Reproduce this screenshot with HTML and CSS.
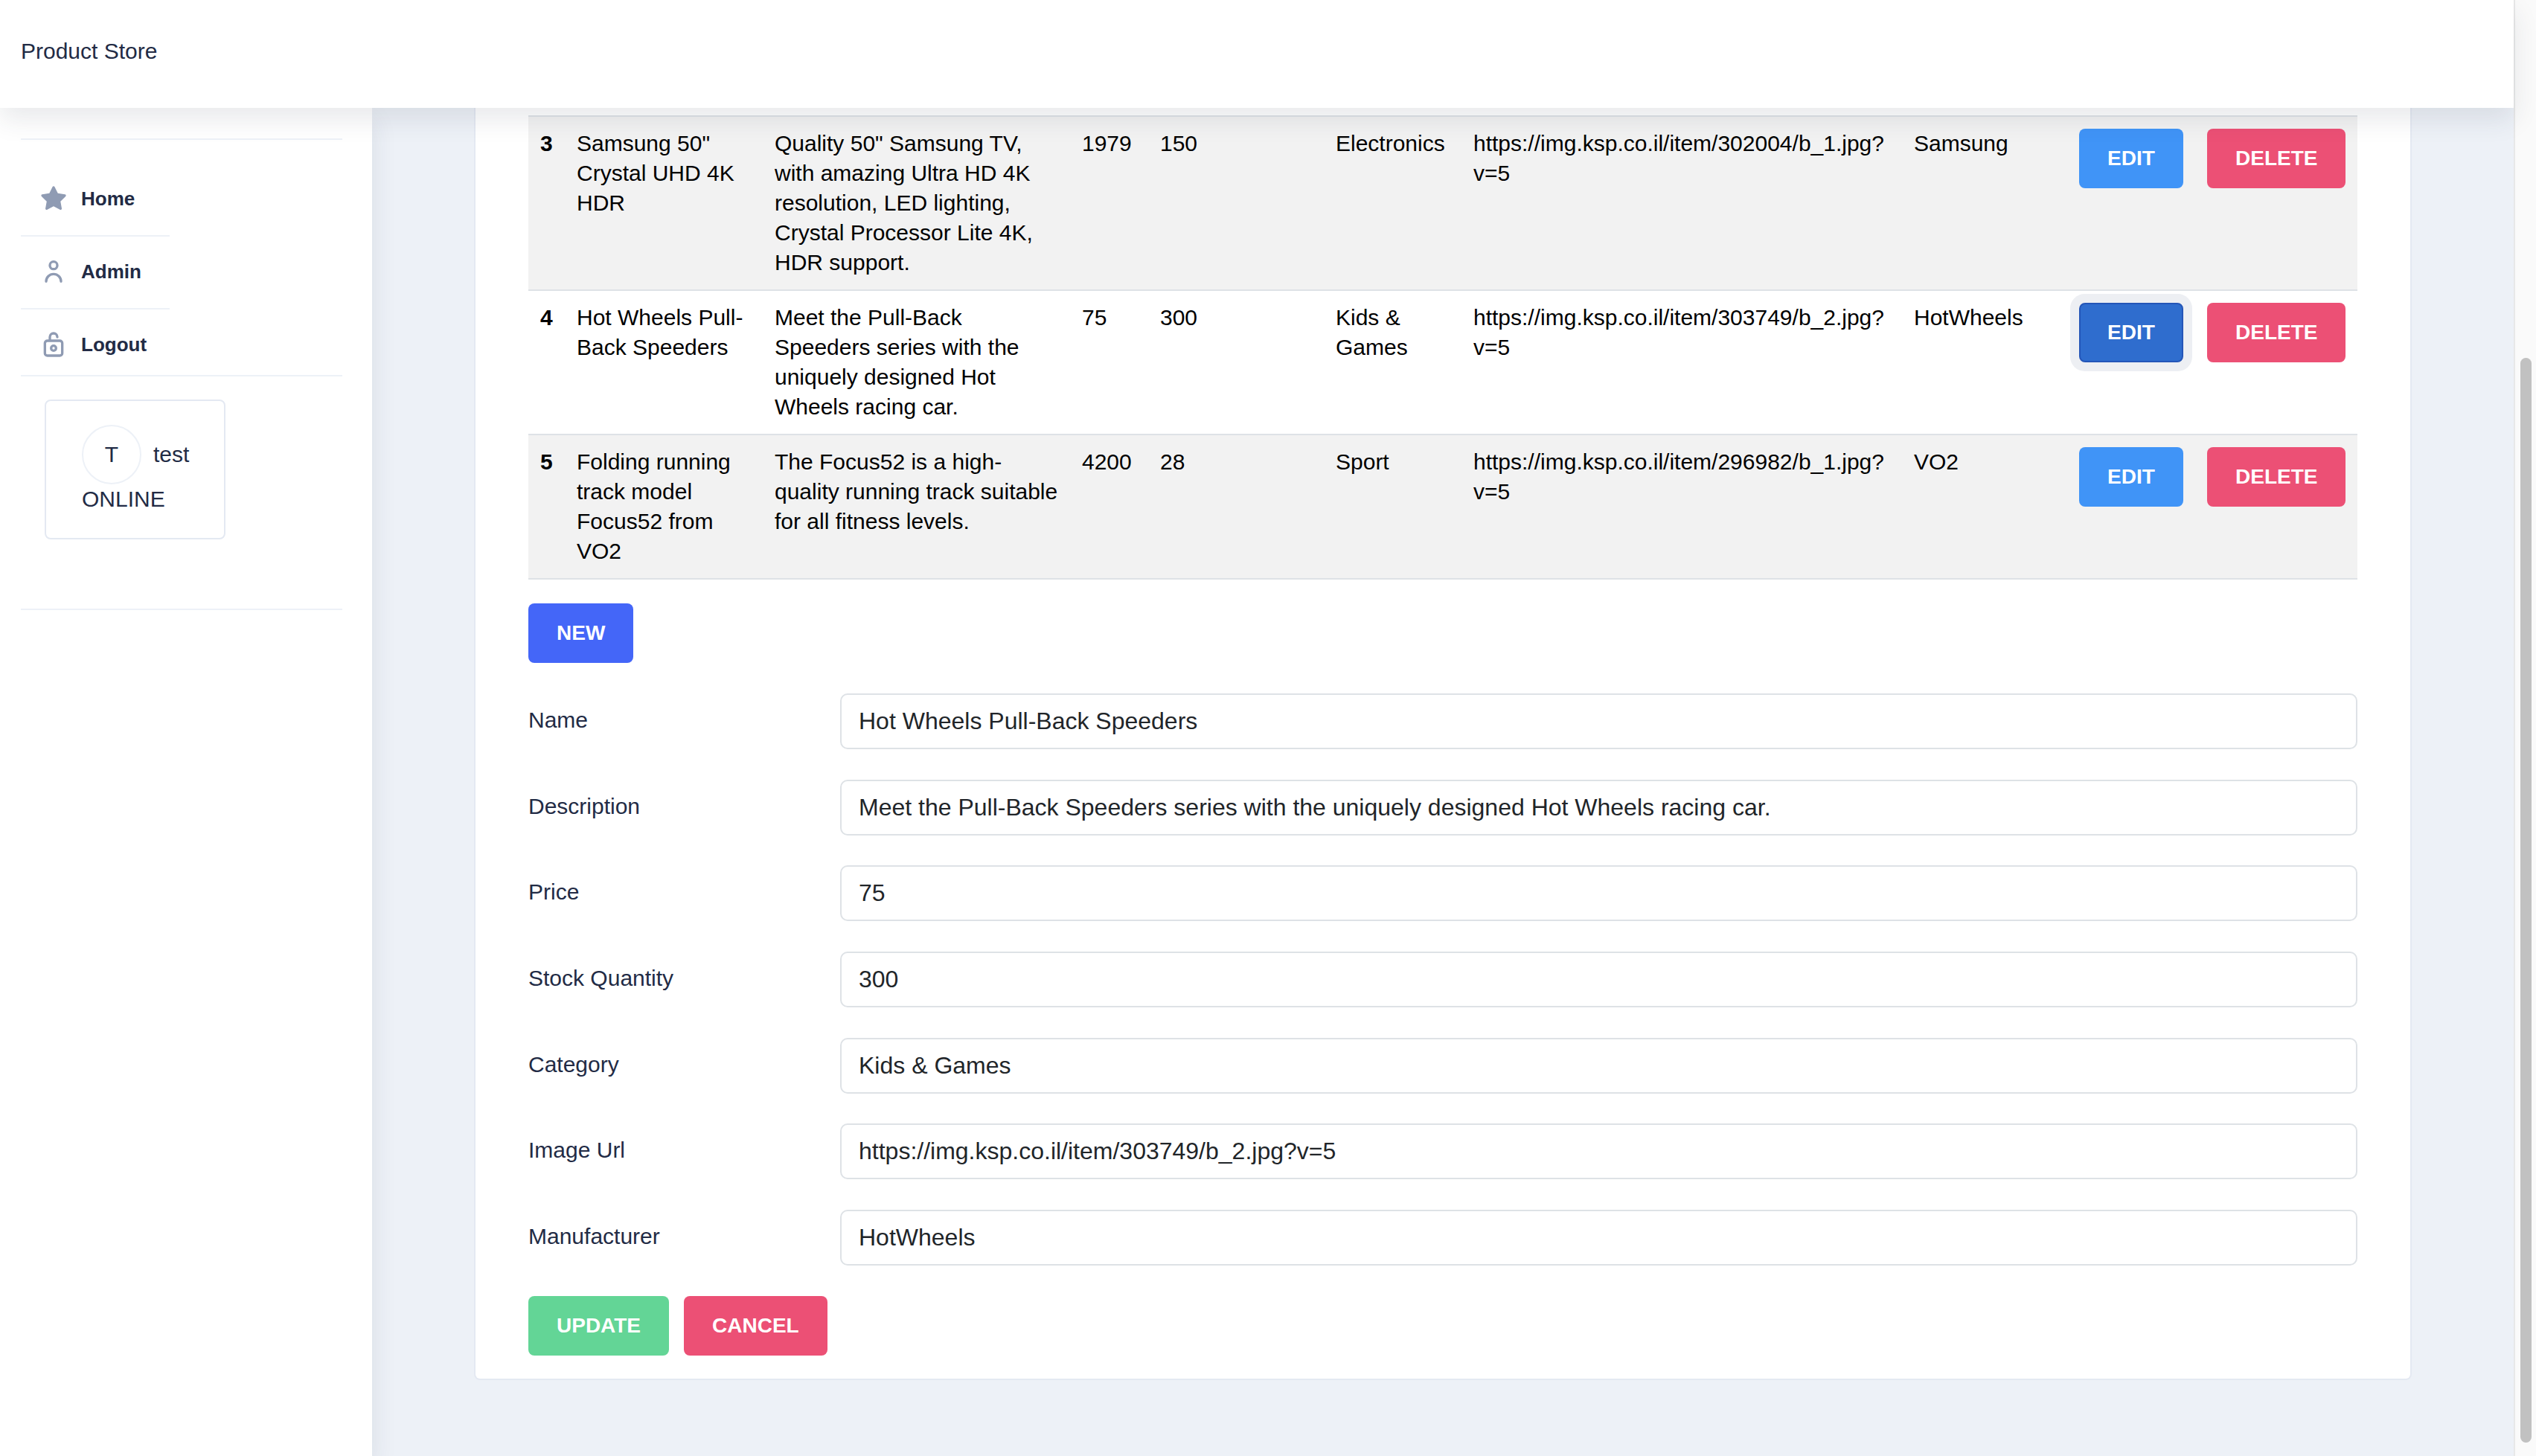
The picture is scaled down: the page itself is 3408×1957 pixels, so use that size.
FILE: index.html
```html
<!DOCTYPE html>
<html lang="en">

<head>
  <meta charset="UTF-8">
  <title>Product Store</title>
  <link rel="stylesheet" href="styles.css">
</head>

<body>
  <div class="app">
    <header class="topbar">Product Store</header>

    <div class="content">
      <aside class="sidebar">
        <hr class="rule first-rule">
        <ul class="menu">
          <li class="menu-item">
            <svg class="menu-icon" viewBox="0 0 24 24"><path d="M17.56 21a1 1 0 0 1-.46-.11L12 18.22l-5.1 2.67a1 1 0 0 1-1.45-1.06l1-5.63-4.12-4a1 1 0 0 1-.25-1 1 1 0 0 1 .81-.68l5.7-.83 2.51-5.13a1 1 0 0 1 1.8 0l2.54 5.12 5.7.83a1 1 0 0 1 .81.68 1 1 0 0 1-.25 1l-4.12 4 1 5.63a1 1 0 0 1-.4 1 1 1 0 0 1-.62.19z"/></svg>
            <span>Home</span>
          </li>
          <li class="menu-item">
            <svg class="menu-icon" viewBox="0 0 24 24"><path d="M12 11a4 4 0 1 0-4-4 4 4 0 0 0 4 4zm0-6a2 2 0 1 1-2 2 2 2 0 0 1 2-2z"/><path d="M12 13a7 7 0 0 0-7 7 1 1 0 0 0 2 0 5 5 0 0 1 10 0 1 1 0 0 0 2 0 7 7 0 0 0-7-7z"/></svg>
            <span>Admin</span>
          </li>
          <li class="menu-item last-item">
            <svg class="menu-icon" viewBox="0 0 24 24"><path d="M17 8h-7V6a2 2 0 0 1 4 0 1 1 0 0 0 2 0 4 4 0 0 0-8 0v2H7a3 3 0 0 0-3 3v8a3 3 0 0 0 3 3h10a3 3 0 0 0 3-3v-8a3 3 0 0 0-3-3zm1 11a1 1 0 0 1-1 1H7a1 1 0 0 1-1-1v-8a1 1 0 0 1 1-1h10a1 1 0 0 1 1 1z"/><path d="M12 12a3 3 0 1 0 3 3 3 3 0 0 0-3-3zm0 4a1 1 0 1 1 1-1 1 1 0 0 1-1 1z"/></svg>
            <span>Logout</span>
          </li>
        </ul>
        <div class="user-card">
          <div class="user-row">
            <div class="avatar">T</div>
            <span>test</span>
          </div>
          <div class="user-status">ONLINE</div>
        </div>
        <hr class="rule last-rule">
      </aside>

      <main class="main">
        <section class="card">
          <table class="products">
            <colgroup>
              <col class="c-id">
              <col class="c-name">
              <col class="c-desc">
              <col class="c-price">
              <col class="c-stock">
              <col class="c-cat">
              <col class="c-url">
              <col class="c-man">
              <col class="c-edit">
              <col class="c-del">
            </colgroup>
            <tbody>
              <tr class="striped">
                <th>3</th>
                <td>Samsung 50" Crystal UHD 4K HDR</td>
                <td>Quality 50" Samsung TV, with amazing Ultra HD 4K resolution, LED lighting, Crystal Processor Lite 4K, HDR support.</td>
                <td>1979</td>
                <td>150</td>
                <td>Electronics</td>
                <td>https://img.ksp.co.il/item/302004/b_1.jpg?v=5</td>
                <td>Samsung</td>
                <td><button class="btn btn-edit">EDIT</button></td>
                <td><button class="btn btn-danger">DELETE</button></td>
              </tr>
              <tr>
                <th>4</th>
                <td>Hot Wheels Pull-Back Speeders</td>
                <td>Meet the Pull-Back Speeders series with the uniquely designed Hot Wheels racing car.</td>
                <td>75</td>
                <td>300</td>
                <td>Kids &amp; Games</td>
                <td>https://img.ksp.co.il/item/303749/b_2.jpg?v=5</td>
                <td>HotWheels</td>
                <td><button class="btn btn-edit btn-active">EDIT</button></td>
                <td><button class="btn btn-danger">DELETE</button></td>
              </tr>
              <tr class="striped">
                <th>5</th>
                <td>Folding running track model Focus52 from VO2</td>
                <td>The Focus52 is a high-quality running track suitable for all fitness levels.</td>
                <td>4200</td>
                <td>28</td>
                <td>Sport</td>
                <td>https://img.ksp.co.il/item/296982/b_1.jpg?v=5</td>
                <td>VO2</td>
                <td><button class="btn btn-edit">EDIT</button></td>
                <td><button class="btn btn-danger">DELETE</button></td>
              </tr>
            </tbody>
          </table>

          <button class="btn btn-new">NEW</button>

          <form class="product-form">
            <label for="name">Name</label>
            <input id="name" type="text" value="Hot Wheels Pull-Back Speeders">
            <label for="description">Description</label>
            <input id="description" type="text" value="Meet the Pull-Back Speeders series with the uniquely designed Hot Wheels racing car.">
            <label for="price">Price</label>
            <input id="price" type="text" value="75">
            <label for="stock">Stock Quantity</label>
            <input id="stock" type="text" value="300">
            <label for="category">Category</label>
            <input id="category" type="text" value="Kids &amp; Games">
            <label for="image">Image Url</label>
            <input id="image" type="text" value="https://img.ksp.co.il/item/303749/b_2.jpg?v=5">
            <label for="manufacturer">Manufacturer</label>
            <input id="manufacturer" type="text" value="HotWheels">
          </form>

          <div class="form-actions">
            <button class="btn btn-success">UPDATE</button>
            <button class="btn btn-danger">CANCEL</button>
          </div>
        </section>
      </main>
    </div>
  </div>

  <div class="scrollbar">
    <div class="scroll-thumb"></div>
  </div>
</body>

</html>
```

FILE: styles.css
```css
* {
  box-sizing: border-box;
}

html,
body {
  margin: 0;
  height: 1957px;
  overflow: hidden;
}

body {
  display: flex;
  font-family: "Liberation Sans", Arial, sans-serif;
  font-size: 30px;
  line-height: 40px;
  color: #222b45;
  background: #edf1f7;
}

.app {
  flex: 1;
  display: flex;
  flex-direction: column;
  min-width: 0;
  height: 1957px;
}

.topbar {
  position: relative;
  z-index: 2;
  flex: none;
  height: 145px;
  padding: 49px 28px 0;
  background: #fff;
  box-shadow: 0 16px 32px 0 rgba(44, 51, 73, 0.1);
}

.content {
  flex: 1;
  display: flex;
  min-height: 0;
}

/* sidebar */
.sidebar {
  position: relative;
  z-index: 1;
  width: 500px;
  padding: 41px 40px 0 28px;
  background: #fff;
  box-shadow: 0 16px 32px 0 rgba(44, 51, 73, 0.1);
}

.rule {
  height: 2px;
  margin: 0;
  border: 0;
  background: #edf1f7;
}

.menu {
  list-style: none;
  margin: 32px 0 0;
  padding: 0;
}

.menu-item {
  display: flex;
  align-items: center;
  width: 200px;
  height: 98px;
  padding: 27px 0 29px 24px;
  border-bottom: 2px solid #edf1f7;
  font-size: 26px;
  font-weight: bold;
}

.last-item {
  width: auto;
  height: 90px;
  padding-bottom: 21px;
}

.menu-icon {
  flex: none;
  width: 40px;
  height: 40px;
  margin-right: 17px;
  fill: #8f9bb3;
}

.user-card {
  width: 243px;
  margin: 31px 0 0 32px;
  padding: 32px 48px;
  border: 2px solid #e4e9f2;
  border-radius: 8px;
}

.user-row {
  display: flex;
  align-items: center;
}

.avatar {
  flex: none;
  width: 80px;
  height: 80px;
  margin-right: 16px;
  border: 2px solid #edf1f7;
  border-radius: 50%;
  line-height: 76px;
  text-align: center;
}

.last-rule {
  margin-top: 93px;
}

/* main card */
.main {
  flex: 1;
  padding: 0 137px;
  min-width: 0;
}

.card {
  padding: 10px 71px 31px;
  border: 2px solid #e4e9f2;
  border-top: 0;
  border-radius: 0 0 8px 8px;
  background: #fff;
}

.products {
  width: 100%;
  border-collapse: separate;
  border-spacing: 0;
  table-layout: fixed;
  color: #000;
  border-bottom: 2px solid #dee2e6;
}

.c-id { width: 49px; }
.c-name { width: 266px; }
.c-desc { width: 413px; }
.c-price { width: 105px; }
.c-stock { width: 236px; }
.c-cat { width: 185px; }
.c-url { width: 592px; }
.c-man { width: 222px; }
.c-edit { width: 172px; }
.c-del { width: 218px; }

.products th,
.products td {
  padding: 16px;
  border-top: 2px solid #dee2e6;
  text-align: left;
  vertical-align: top;
}

.striped {
  background: #f2f2f2;
}

/* buttons */
.btn {
  display: block;
  height: 80px;
  padding: 0 36px;
  border: 2px solid transparent;
  border-radius: 8px;
  font-family: inherit;
  font-size: 28px;
  font-weight: bold;
  color: #fff;
}

.btn-edit {
  background: #4094f7;
}

.btn-active {
  background: #2f6dce;
  border-color: #2456b8;
  box-shadow: 0 0 0 12px #edeff3;
}

.btn-danger {
  background: #ec5075;
}

.btn-new {
  margin: 32px 0 41px;
  background: #4466f8;
}

.btn-success {
  background: #63d596;
}

/* form */
.product-form {
  display: grid;
  grid-template-columns: 419px 1fr;
  row-gap: 40.67px;
}

.product-form label {
  padding-top: 16px;
}

.product-form input {
  width: 100%;
  height: 75px;
  padding: 0 23px;
  border: 2px solid #dee2e6;
  border-radius: 10px;
  font-family: inherit;
  font-size: 32px;
  color: #212529;
  background: #fff;
}

.form-actions {
  display: flex;
  gap: 20px;
  margin-top: 41px;
}

/* drawn scrollbar */
.scrollbar {
  flex: none;
  width: 30px;
  padding: 481px 6px 0 7px;
  border-left: 2px solid #e8e8e8;
  background: #fafafa;
}

.scroll-thumb {
  height: 1458px;
  border-radius: 8px;
  background: #c1c1c1;
}
```
